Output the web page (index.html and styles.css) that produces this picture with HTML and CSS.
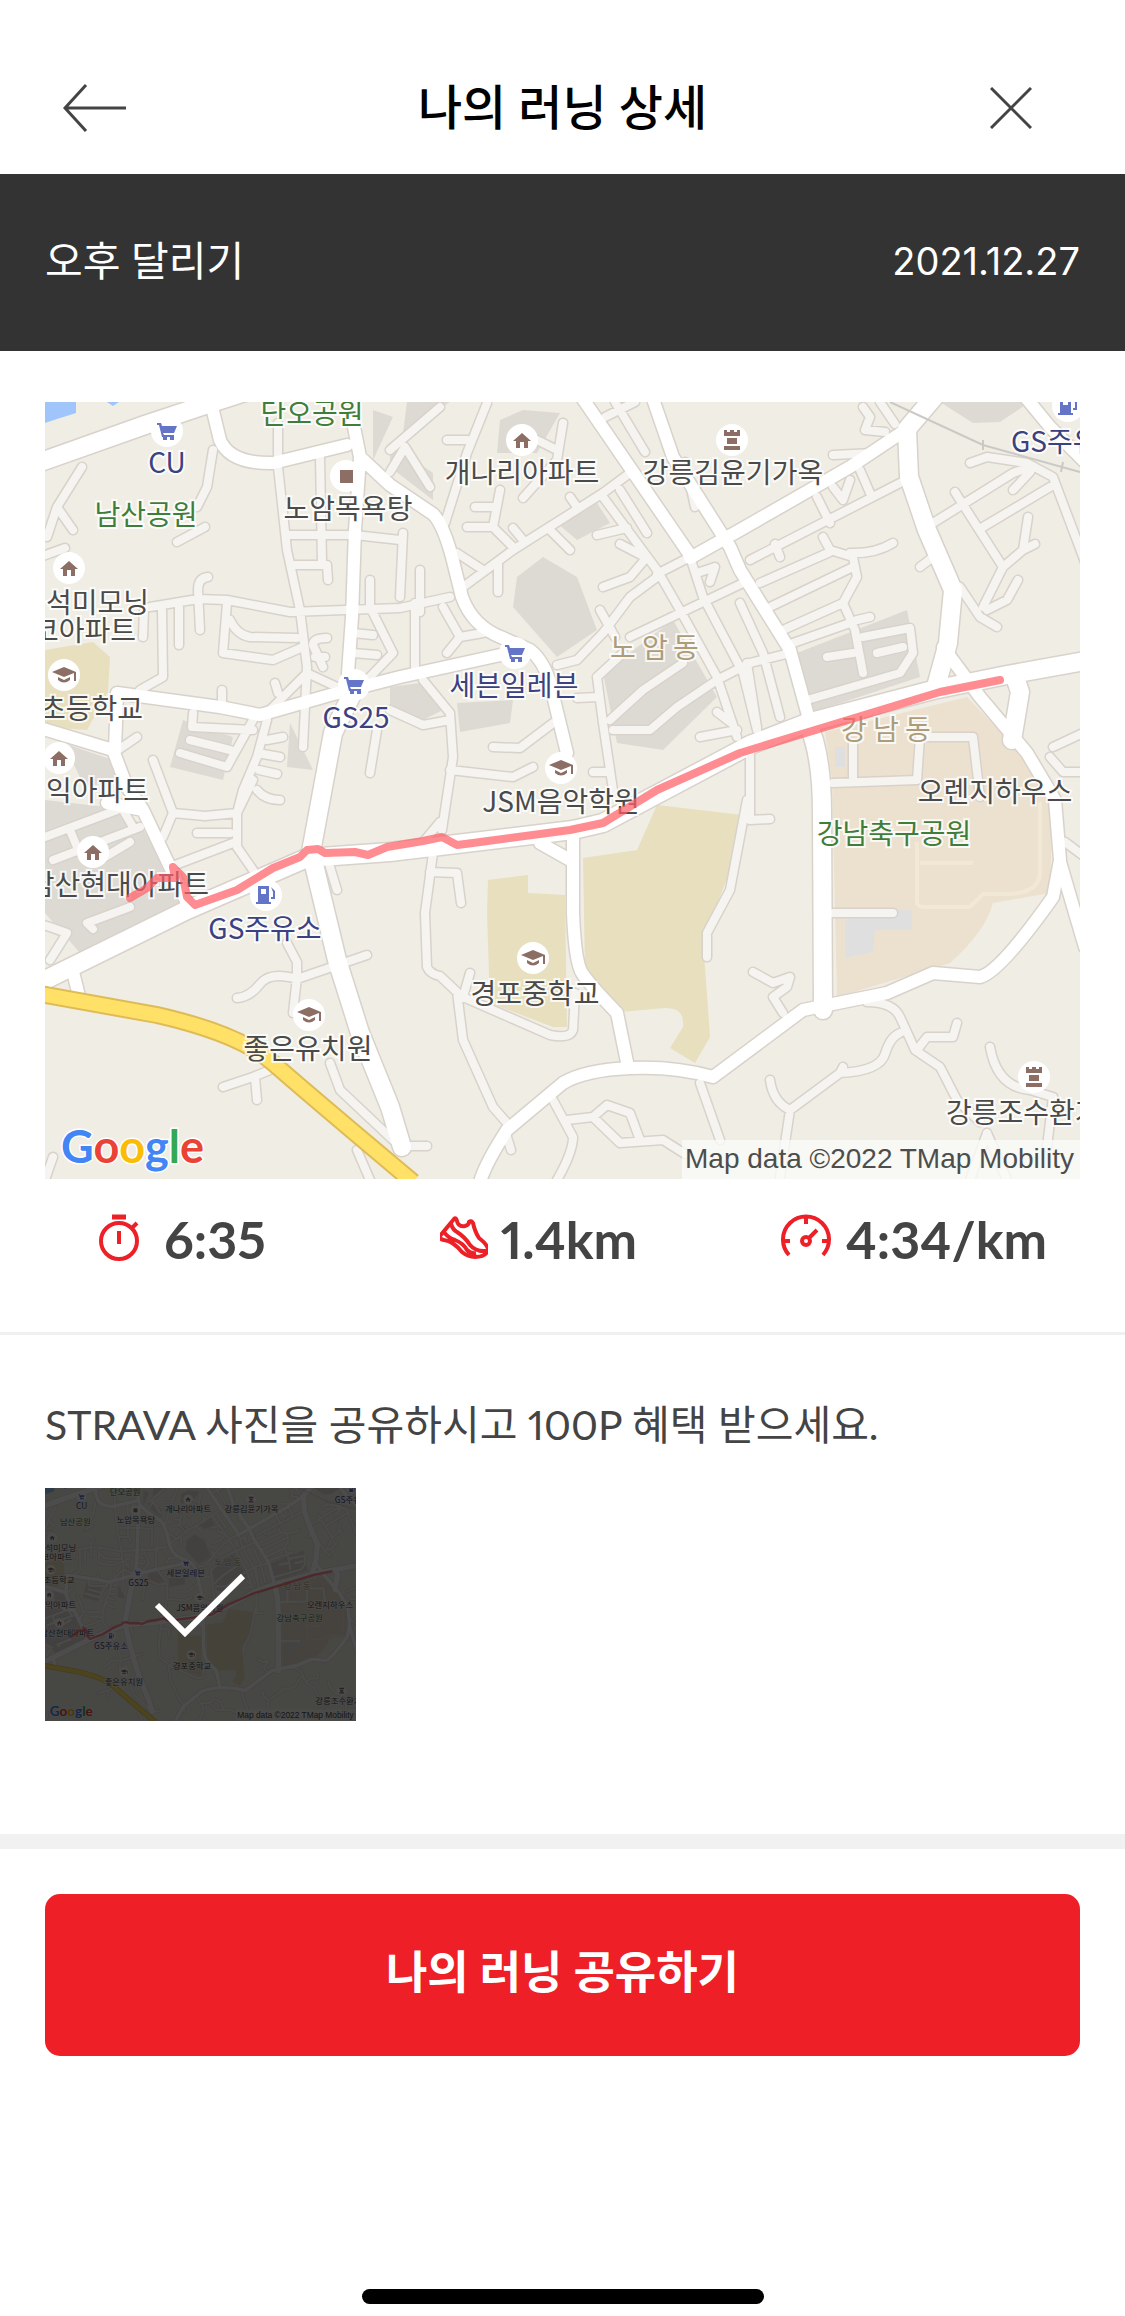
FILE: index.html
```html
<!DOCTYPE html>
<html lang="ko">
<head>
  <meta charset="UTF-8" />
  <meta name="viewport" content="width=device-width, initial-scale=1.0" />
  <title>나의 러닝 상세</title>
  <link rel="stylesheet" href="styles.css">
</head>
<body>
  <header class="topbar">
    <button class="btn-icon" type="button" aria-label="뒤로">
      <svg width="64" height="48" viewBox="0 0 64 48"><path d="M23 1L2 24l21 23M2 24h61" /></svg>
    </button>
    <h1>나의 러닝 상세</h1>
    <button class="btn-icon btn-close" type="button" aria-label="닫기">
      <svg width="42" height="42" viewBox="0 0 42 42"><path d="M1 1l40 40M41 1L1 41" /></svg>
    </button>
  </header>

  <div class="run-bar">
    <span>오후 달리기</span>
    <time datetime="2021-12-27">2021.12.27</time>
  </div>

  <main>
    <section class="run">
      <svg class="map" viewBox="0 0 1035 777" role="img" aria-label="러닝 경로 지도">
        <defs>
          <!-- roads by width, each drawn twice: outline then fill -->
          <path id="roads-s" d="M37 65L12 105 28 128M12 105L2 135M20 146L-5 155M168 48L162 85 152 105M160 125L132 140
            M233 21V65L242 148 255 208 262 265 258 345M275 55L277 161M242 133H310L355 138M248 163H282L283 178
            M105 205L153 197 182 198 245 210 355 206 405 195M98 235L99 208M117 208L118 275 95 288M134 205V243
            M155 228L153 188Q153 176 163 175M182 201L178 251 228 258 258 245M185 218Q192 233 205 235L252 236
            M325 178V205L348 251 322 278M308 251L332 253M308 231L328 233M282 236Q268 236 268 243L278 265M270 255H280
            M262 271L292 285M262 271L225 308M230 281L233 291M177 288V303M148 311L147 325 208 328M208 318L182 365 135 351
            M145 338L185 348M222 318L212 355 198 388 192 411V445L208 468M222 338L238 335M218 352L235 355M214 368L232 372
            M332 328L325 371M92 335L73 348M108 358L128 411 118 435M128 411L160 414 192 411M152 431H185M125 465L188 441
            M208 378L192 411M212 388Q220 398 235 398M0 435L72 408M8 458L95 425M25 428L32 445M60 455L85 440M78 408L88 425
            M85 505L42 521 48 527M-5 522L5 525 22 531 5 558M242 541L252 560V575L248 611M192 596Q205 595 215 582T252 577L322 553
            M285 465L292 488M285 661L295 688 348 738M178 685L208 675 225 668M210 675L212 698M312 748L325 778M0 778L8 755
            M442 1L422 51 400 121M402 38H422M345 48L395 5M518 21L512 58 478 96M492 38L512 48M345 70L360 45 385 85
            M418 185L468 148 558 91 585 71M422 125H448L468 145M455 88L448 125M430 105H450M453 161V190M505 128L525 148M468 126L478 138M525 95L532 105
            M558 95L612 168 635 208 672 275 692 335M575 88L602 131M552 133L582 126M558 185L585 175 602 155M575 142L600 155
            M645 155L658 195 698 271 712 328M612 175L585 195 558 231 532 258 512 263M555 208L570 235M612 172L645 155
            M585 235L698 181M552 275L578 251M552 275L558 321 568 388M532 296L553 295M548 370L565 370
            M568 328L605 328 632 305 672 278 705 261 745 251M565 318L598 288 638 261M655 335L692 328M672 310L685 320M655 170L670 165 665 180
            M375 168V210M370 201V265M398 205L415 235 402 251M415 235L438 231M345 308L378 323 405 318M378 278L405 311 408 355 397 428
            M405 368L468 375 488 365M448 345L475 346 508 321M412 151L438 168M358 131L355 195M380 438L395 420
            M705 158L855 81M715 181L785 150M725 205L808 165M738 228L798 201M748 241L805 221M778 135L785 148 808 155 812 175 798 201 810 228 818 271
            M805 151Q830 152 848 141M772 95L785 121M815 68L825 91M788 85L798 98 805 78M730 142L735 155M812 218L825 215
            M762 298L855 271 868 251 865 226 818 235M832 251L858 245M782 255L808 251M695 201L718 251 735 315M702 261L712 325
            M570 0L600 50M560 15L590 0M640 60L650 105M888 121L968 71 985 65M925 61L942 55 982 61 1008 75 1040 160M938 125L1005 85M968 88L985 70
            M910 90L915 98 958 165 938 205M958 165L978 148 983 115M978 148L990 142M915 185L935 215 952 225M942 208L962 198 973 178M875 165L888 155
            M788 53L828 51M818 5L825 15 820 28 840 30M835 0L850 22M808 341V375M875 335L872 378 788 381M878 335H928L935 395M787 511H848
            M388 451L380 511 382 565Q385 572 395 574L412 590 418 638 448 705 462 721M385 470L412 471 416 501M425 571L418 595 505 633Q525 637 528 628L530 591
            M462 735L466 748M508 698L528 735Q528 750 512 778M522 718L548 715 575 741 618 738 640 752M548 715L562 703 585 711 595 738M655 681L675 738M365 744H382
            M702 398L685 488 662 531V555M705 351V418L725 417M708 570L728 581 745 575 742 585 728 595 738 611
            M822 600Q848 600 855 615T870 648L895 665 912 698 935 720M855 631Q845 635 840 652T795 671L745 708 735 775M725 678Q728 700 745 708M795 671L798 665
            M872 648L882 635H908L912 621M945 645Q952 685 985 688L1008 695 1002 745M942 731L925 778M942 731L962 778M1008 345L1040 330M1005 355L1018 370 1040 370M1020 440L1040 455" />
          <path id="roads-m" d="M167 5L175 38Q185 62 228 61L302 43M308 20L315 55 310 128 307 215 303 271
            M315 55L345 83 388 112Q398 122 407 155L417 195Q428 225 458 236L485 248Q500 260 506 285L522 351
            M72 291L175 305 215 313 285 293 355 275 478 248M-5 326L68 348 82 385 98 408 125 465 142 501M72 291L70 348M62 401L98 408
            M495 441L525 458M538 -3L645 153M608 -3L628 55 685 145 695 168 745 248 762 310M865 25L805 65 695 128 645 156
            M528 428V511Q530 560 537 571T572 611L583 665M435 780Q440 762 462 728L518 681Q540 668 585 666T668 675L758 608 842 591 888 571 935 575Q955 570 1008 495L1015 458 1010 398 982 351 935 295 898 245
            M1015 460L1040 545M982 -3L1005 25 1040 60M28 570L33 590" />
          <path id="roads-l" d="M-10 62L100 23 160 3 200 -10M308 290L288 331 266 450 292 558 315 631 345 705 357 745
            M-10 583L142 508 195 485 262 456 345 450 528 428 558 421 705 343 762 321 888 288 962 273 1040 259
            M890 -6L862 27 864 75 882 128 908 188 903 241 892 281M970 275L975 290 967 338M762 320Q777 350 777 411L778 608" />
          <g id="pin-home"><circle r="16" /><path class="poi" d="M-9 1L0-7 9 1H6V8H2V2H-2V8H-6V1Z" /></g>
          <g id="pin-school"><circle r="16" /><path class="poi" d="M-12-3L0-8 12-3V6H10V-2L0 2ZM-6 2L0 5 6 2V5Q0 10-6 5Z" /></g>
          <g id="pin-cart"><circle r="16" /><path class="shop" d="M-10-8H-6L-5-5H10L7 2H-4L-3 4H7V6H-5L-8-6H-10ZM-4 6h4v3h-4zM3 6h4v3H3z" /></g>
          <g id="pin-fuel"><circle r="16" /><path class="shop" d="M-8-9H3V7H5V9H-10V7H-8ZM-5-6V-1H0V-6ZM5-8L9-4V4H5V2H7V-3Z" fill-rule="evenodd" /></g>
          <g id="pin-tower"><circle r="16" /><path class="poi" d="M-8-10H-5V-8H-2V-10H2V-8H5V-10H8V-4H-8ZM-5-2H5V4H-5ZM-8 6H8V10H-8Z" /></g>
        </defs>

        <g id="run-map">
          <rect class="land" width="1035" height="777" />
          <path class="water" d="M0 0H31V11L12 17 0 21ZM62 0H74L68 4Z" />
          <path class="block" d="M498 155L532 175 552 228 512 255 468 205 472 175ZM412 301L468 298 465 321 415 330ZM345 285L375 281 398 308 378 318 345 305Z
            M512 121L552 101 565 121 532 138ZM558 271L628 218 672 295 618 348 572 341ZM455 18L478 8 515 11 492 51 452 51ZM345 41L388 71V98L345 65Z
            M362 0H405L358 31ZM328 8L348 15 328 58ZM138 318L188 335 178 378 125 365ZM245 321L268 368 242 365ZM18 341L68 358 75 378 40 385Z
            M0 398L62 405 95 421 138 501 35 551 0 511ZM752 251L862 208 875 275 765 311ZM895 0H985L955 20 928 21Z" />
          <path class="school" d="M0 248L48 240 65 255 63 290 42 328 0 325ZM443 478L483 473V491L520 493 522 625 508 625 445 601 442 511Z
            M538 456L592 448 612 403 697 413 692 451 658 538 665 635 650 661 625 646 638 625Q640 605 620 606L575 610 552 591 540 565Z" />
          <path class="park" d="M780 330L922 295 982 358 1008 388 1005 491 948 501Q940 530 905 561L882 568 792 595 787 378Z" />
          <path class="park-path" d="M872 440V500Q872 505 880 505H925L938 492H965Q995 490 995 470V400M875 461H928" />
          <path class="building" d="M800 518L848 508H867V528H830L828 550 800 556ZM790 345h10v20h-10z" />
          <use class="outline w-s" href="#roads-s" />
          <use class="outline w-m" href="#roads-m" />
          <use class="outline w-l" href="#roads-l" />
          <use class="lane w-s" href="#roads-s" />
          <use class="road w-m" href="#roads-m" />
          <use class="road w-l" href="#roads-l" />
          <path class="rail" d="M845 0L938 43 1035 70M938 38V48M1018 60L1016 70" />
          <path class="highway-edge" d="M-5 592L112 613Q195 632 228 661T368 780" />
          <path class="highway" d="M-5 592L112 613Q195 632 228 661T368 780" />

          <g class="pins">
            <use href="#pin-cart" x="122" y="29" />
            <use href="#pin-cart" x="309" y="283" />
            <use href="#pin-cart" x="470" y="251" />
            <use href="#pin-home" x="24" y="166" />
            <use href="#pin-home" x="14" y="356" />
            <use href="#pin-home" x="48" y="450" />
            <use href="#pin-home" x="477" y="38" />
            <use href="#pin-school" x="19" y="273" />
            <use href="#pin-school" x="516" y="366" />
            <use href="#pin-school" x="488" y="556" />
            <use href="#pin-school" x="264" y="613" />
            <use href="#pin-fuel" x="221" y="493" />
            <use href="#pin-fuel" x="1023" y="4" />
            <use href="#pin-tower" x="687" y="38" />
            <use href="#pin-tower" x="989" y="675" />
            <circle cx="301" cy="74" r="16" />
            <path class="poi" d="M295 68h13v13h-13z" />
          </g>

          <g class="labels">
            <text class="shop" x="122" y="71">CU</text>
            <text class="shop" x="311" y="326">GS25</text>
            <text class="shop" x="469" y="294">세븐일레븐</text>
            <text class="shop" x="220" y="537">GS주유소</text>
            <text class="shop start" x="966" y="50">GS주유소</text>
            <text class="green" x="101" y="123">남산공원</text>
            <text class="green" x="267" y="22">단오공원</text>
            <text class="green" x="849" y="442">강남축구공원</text>
            <text x="303" y="117">노암목욕탕</text>
            <text x="477" y="81">개나리아파트</text>
            <text x="688" y="81">강릉김윤기가옥</text>
            <text class="start" x="1" y="211">석미모닝</text>
            <text class="end" x="91" y="239">코아파트</text>
            <text class="end" x="98" y="317">초등학교</text>
            <text class="start" x="1" y="399">익아파트</text>
            <text class="end" x="164" y="493">남산현대아파트</text>
            <text x="516" y="410">JSM음악학원</text>
            <text x="490" y="602">경포중학교</text>
            <text x="263" y="657">좋은유치원</text>
            <text x="950" y="400">오렌지하우스</text>
            <text class="start" x="901" y="721">강릉조수환가옥</text>
            <text class="area start" x="565 597 628" y="256">노암동</text>
            <text class="area start" x="796 828 860" y="338">강남동</text>
          </g>

          <path class="route" d="M85 496L102 486 112 476 130 476 128 465 138 475 142 495 150 503 192 488 228 466 255 455 262 448 273 447 280 451 310 450 323 453 342 445 378 439 397 435 412 443 428 441 525 428 558 421 612 388 695 351 895 290 955 278" />

          <text class="google" x="16" y="761"><tspan fill="#4285f4">G</tspan><tspan fill="#ea4335">o</tspan><tspan fill="#fbbc05">o</tspan><tspan fill="#4285f4">g</tspan><tspan fill="#34a853">l</tspan><tspan fill="#ea4335">e</tspan></text>
          <rect class="credit-bg" x="637" y="738" width="398" height="39" />
          <text class="credit" x="1029" y="766">Map data ©2022 TMap Mobility</text>
        </g>
      </svg>

      <ul class="stats">
        <li>
          <svg width="52" height="52" viewBox="0 0 52 52"><path d="M13 4h14" stroke-width="5" /><circle cx="20" cy="28" r="18" /><path d="M20 18v13M33 15l5-5" /></svg>
          <span>6:35</span>
        </li>
        <li>
          <svg width="48" height="52" viewBox="5 0 48 52"><path d="M5 23L19 6q2-2 3 2 1 6 8 5 4-1 4-4 2-2 4 1 2 9 6 15 9 7 9 12-2 7-13 7-7 0-13-5Q18 28 9 27 4 26 5 23ZM16 11q2 6 6 8 8 5 13 13 6 7 16 6M9 19q4 6 11 8 8 3 12 10 4 4 9 3" /></svg>
          <span>1.4km</span>
        </li>
        <li>
          <svg width="52" height="52" viewBox="0 0 52 52"><path d="M8 42A23 23 0 1 1 42 42M25 3v8M2 28h7M41 28h7M28 25l8-8" /><circle cx="25" cy="28" r="4" /></svg>
          <span>4:34/km</span>
        </li>
      </ul>
    </section>

    <section class="share">
      <p>STRAVA 사진을 공유하시고 100P 혜택 받으세요.</p>
      <label class="photo">
        <input type="checkbox" checked aria-label="지도 사진 선택">
        <svg class="photo-map" viewBox="0 0 1035 777" aria-hidden="true"><use href="#run-map" /></svg>
        <span class="photo-check">
          <svg width="92" height="64" viewBox="0 0 92 64"><path d="M3 32l28 28L89 3" /></svg>
        </span>
      </label>
    </section>

    <div class="action">
      <button class="btn-share" type="button">나의 러닝 공유하기</button>
    </div>
  </main>

  <div class="home-bar"></div>
</body>
</html>
```
FILE: styles.css
```css
* {
  box-sizing: border-box;
}
body {
  display: flex;
  flex-direction: column;
  min-height: 100vh;
  margin: 0;
  background-color: #fff;
  color: #444;
  font-family: 'Lato', 'Noto Sans CJK KR', sans-serif;
  font-size: 41px;
  font-variant-numeric: proportional-nums;
  line-height: 60px;
}
button {
  font-family: inherit;
  border: none;
  padding: 0;
  cursor: pointer;
}

/* header */
.topbar {
  display: grid;
  grid-template-columns: 1fr auto 1fr;
  align-items: center;
  height: 174px;
  padding: 42px 93px 0 63px;
}
.topbar h1 {
  margin: 0 0 3px 30px;
  color: #000;
  font-size: 48px;
  font-weight: 500;
}
.btn-icon {
  display: flex;
  justify-self: start;
  background: none;
}
.btn-icon path {
  fill: none;
  stroke: #444;
  stroke-width: 3;
}
.btn-close {
  justify-self: end;
}
.run-bar {
  display: flex;
  justify-content: space-between;
  align-items: center;
  padding: 57px 45px 60px;
  background-color: #333;
  color: #fff;
}
.run-bar time {
  font-family: 'Inter', sans-serif;
  font-size: 38px;
}

/* run */
.run {
  padding: 51px 45px 63px;
  border-bottom: 3px solid #f0f0f0;
}
.map {
  display: block;
  width: 100%;
}
.stats {
  display: grid;
  grid-template-columns: 1fr 1fr auto;
  margin: 30px 0 0;
  padding: 0 33px 0 54px;
  list-style: none;
  font-size: 52px;
  font-weight: bold;
}
.stats li {
  display: flex;
  align-items: center;
  gap: 13px;
}
.stats svg {
  fill: none;
  stroke: #ee2027;
  stroke-width: 4;
}

/* map */
.land { fill: #efede4; }
.water { fill: #9fc5fb; }
.block { fill: #dddad4; }
.school { fill: #e8dfbe; }
.park { fill: #ece1cf; }
.building { fill: #dfdfdf; }
.park-path {
  fill: none;
  stroke: #f1e8d5;
  stroke-width: 4;
}
.outline, .lane, .road {
  fill: none;
  stroke-linecap: round;
  stroke-linejoin: round;
}
.lane { stroke: #f6f4f1; }
.road { stroke: #fff; }
.w-s { stroke-width: 8px; }
.w-m { stroke-width: 12px; }
.w-l { stroke-width: 18px; }
.outline { stroke: #d8d2cb; }
.outline.w-s { stroke-width: 11px; }
.outline.w-m { stroke-width: 15px; }
.outline.w-l { stroke-width: 21px; }
.rail {
  fill: none;
  stroke: #cbc9c5;
  stroke-width: 2;
}
.highway-edge, .highway {
  fill: none;
  stroke: #dfbb57;
  stroke-width: 18;
}
.highway {
  stroke: #ffe168;
  stroke-width: 14;
}
.route {
  fill: none;
  stroke: #ff5f66;
  stroke-opacity: 0.72;
  stroke-width: 8;
  stroke-linecap: round;
  stroke-linejoin: round;
}
.pins { fill: #fff; }
.pins .poi, .poi { fill: #8d6e65; }
.shop { fill: #6474c6; }
.labels {
  fill: #4a4a4a;
  stroke: #fff;
  stroke-width: 4px;
  stroke-opacity: 0.8;
  paint-order: stroke;
  font-family: 'Noto Sans CJK KR', sans-serif;
  font-size: 28px;
  text-anchor: middle;
}
.labels .shop { fill: #3c4180; }
.labels .green { fill: #3f7d3b; }
.labels .area { fill: #ac9c78; }
.labels .start { text-anchor: start; }
.labels .end { text-anchor: end; }
.google {
  stroke: #fff;
  stroke-width: 3px;
  paint-order: stroke;
  font-family: 'Lato', sans-serif;
  font-size: 45px;
  font-weight: bold;
}
.credit-bg {
  fill: #fafaf7;
  fill-opacity: 0.8;
}
.credit {
  fill: #4d4d4d;
  font-family: 'Liberation Sans', sans-serif;
  font-size: 28px;
  text-anchor: end;
}

/* share */
.share {
  padding: 60px 45px 113px;
  border-bottom: 15px solid #f1f1f1;
}
.share p {
  margin: 0 0 33px;
}
.photo {
  position: relative;
  display: block;
  width: 30%;
  cursor: pointer;
}
.photo input {
  position: absolute;
  opacity: 0;
}
.photo-map {
  display: block;
  width: 100%;
}
.photo-check {
  position: absolute;
  inset: 0;
  display: none;
  align-items: center;
  justify-content: center;
  background-color: rgba(0, 0, 0, 0.7);
}
.photo input:checked ~ .photo-check {
  display: flex;
}
.photo-check path {
  fill: none;
  stroke: #fff;
  stroke-width: 6;
}
.action {
  padding: 45px;
}
.btn-share {
  width: 100%;
  height: 162px;
  padding-bottom: 12px;
  border-radius: 15px;
  background-color: #ee1f26;
  color: #fff;
  font-size: 45px;
  font-weight: bold;
}
.home-bar {
  width: 402px;
  height: 15px;
  margin: auto auto 12px;
  border-radius: 8px;
  background-color: #000;
}
```
